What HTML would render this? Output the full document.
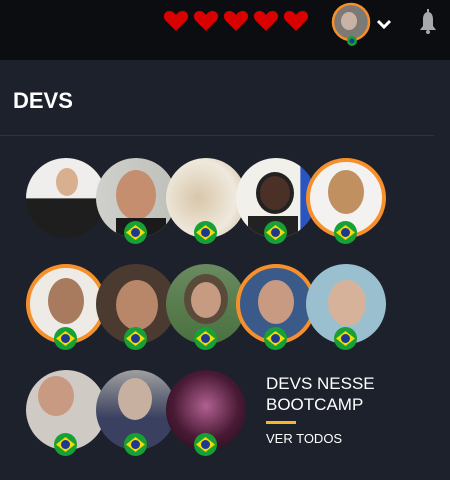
<!DOCTYPE html>
<html><head><style>
*{margin:0;padding:0;box-sizing:border-box}
body{width:450px;height:480px;background:#1c212b;font-family:"Liberation Sans","DejaVu Sans",sans-serif;position:relative;overflow:hidden}
.top{position:absolute;left:0;top:0;width:450px;height:60px;background:#0b0d10}
.av{position:absolute;width:80px;height:80px;border-radius:50%;overflow:hidden}
.or{border:4px solid #f7902a}
.fl{position:absolute;width:23px;height:23px;border-radius:50%;background:#16a035;overflow:hidden}
.fl:before{content:"";position:absolute;left:2px;top:4px;width:19px;height:15px;background:#f5d90a;clip-path:polygon(50% 0,100% 50%,50% 100%,0 50%)}
.fl:after{content:"";position:absolute;left:7px;top:7px;width:9px;height:9px;border-radius:50%;background:#1d3a8f}
</style></head><body>
<div class="top"></div>
<svg style="position:absolute;left:0;top:0" width="450" height="60">
<g fill="#d90000">
<path id="hh" d="M176 31 L166 21 C162 17 164 11 169.5 11 C172.5 11 174.5 13 176 15 C177.5 13 179.5 11 182.5 11 C188 11 190 17 186 21 Z"/>
<use href="#hh" x="30"/><use href="#hh" x="60"/><use href="#hh" x="90"/><use href="#hh" x="120"/>
</g>
<circle cx="351" cy="22" r="18" fill="#7d7a76" stroke="#f7902a" stroke-width="2.5"/>
<ellipse cx="349" cy="21" rx="8" ry="9" fill="#c9b3a6"/>
<circle cx="352" cy="41" r="5" fill="#16a035"/><circle cx="352" cy="41" r="2.5" fill="#1d3a8f"/>
<path d="M378 21 L384 27 L390 21" stroke="#fff" stroke-width="3" fill="none"/>
<path d="M420 30 L436 30 L433 26 L433 19 C433 15 431 12 428 12 C425 12 423 15 423 19 L423 26 Z" fill="#a7a9ad"/>
<rect x="427" y="9" width="2" height="3" fill="#a7a9ad"/><circle cx="428" cy="32" r="2" fill="#a7a9ad"/>
</svg>
<div style="position:absolute;left:13px;top:88px;color:#fff;font-weight:bold;font-size:22px">DEVS</div>
<div style="position:absolute;left:0;top:135px;width:434px;height:1px;background:#3a3034"></div>

<div class="av" style="left:26px;top:158px;background:linear-gradient(#efeeec 0 50%,#1e1e1e 51%)"><div style="position:absolute;left:30px;top:10px;width:22px;height:28px;border-radius:50%;background:#d8b08f"></div></div>
<div class="av" style="left:96px;top:158px;background:linear-gradient(90deg,#d0d0cc,#bfc0ba)"><div style="position:absolute;left:20px;top:12px;width:40px;height:50px;border-radius:50%;background:#c58e6e"></div><div style="position:absolute;left:20px;top:60px;width:50px;height:30px;background:#1a1a1a"></div></div>
<div class="av" style="left:166px;top:158px;background:radial-gradient(circle at 40% 50%,#d8c7a9,#efe9dd 60%,#cab59a)"></div>
<div class="av" style="left:236px;top:158px;background:linear-gradient(90deg,#f2f0ea 80%,#2a55c0 81%)"><div style="position:absolute;left:20px;top:14px;width:38px;height:42px;border-radius:50%;background:#4a3026;border:4px solid #222"></div><div style="position:absolute;left:12px;top:58px;width:50px;height:30px;background:#222"></div></div>
<div class="av or" style="left:306px;top:158px;background:#f3f2f0"><div style="position:absolute;left:18px;top:8px;width:36px;height:44px;border-radius:50%;background:#c09060"></div></div>

<div class="av or" style="left:26px;top:264px;background:#eeeae6"><div style="position:absolute;left:18px;top:10px;width:36px;height:46px;border-radius:50%;background:#a87a5e"></div></div>
<div class="av" style="left:96px;top:264px;background:#4a3a30"><div style="position:absolute;left:20px;top:16px;width:42px;height:50px;border-radius:50%;background:#b8876a"></div></div>
<div class="av" style="left:166px;top:264px;background:linear-gradient(#6a8a60,#4a7040)"><div style="position:absolute;left:18px;top:10px;width:44px;height:50px;border-radius:50%;background:#5a4a3a"></div><div style="position:absolute;left:25px;top:18px;width:30px;height:36px;border-radius:50%;background:#c79a82"></div></div>
<div class="av or" style="left:236px;top:264px;background:#3a5a8a"><div style="position:absolute;left:18px;top:12px;width:36px;height:44px;border-radius:50%;background:#c89a82"></div></div>
<div class="av" style="left:306px;top:264px;background:#9ac0d0"><div style="position:absolute;left:22px;top:16px;width:38px;height:46px;border-radius:50%;background:#d7b29a"></div></div>

<div class="av" style="left:26px;top:370px;background:#d0cac4"><div style="position:absolute;left:12px;top:6px;width:36px;height:40px;border-radius:50%;background:#c89a82"></div></div>
<div class="av" style="left:96px;top:370px;background:linear-gradient(#a0a0a0,#3a4060 60%)"><div style="position:absolute;left:22px;top:8px;width:34px;height:42px;border-radius:50%;background:#c8b0a0"></div></div>
<div class="av" style="left:166px;top:370px;background:radial-gradient(circle at 50% 45%,#b06090,#4a1a35 55%,#1a0a15)"></div>

<div class="fl" style="left:124px;top:221px"></div><div class="fl" style="left:194px;top:221px"></div><div class="fl" style="left:264px;top:221px"></div><div class="fl" style="left:334px;top:221px"></div>
<div class="fl" style="left:54px;top:327px"></div><div class="fl" style="left:124px;top:327px"></div><div class="fl" style="left:194px;top:327px"></div><div class="fl" style="left:264px;top:327px"></div><div class="fl" style="left:334px;top:327px"></div>
<div class="fl" style="left:54px;top:433px"></div><div class="fl" style="left:124px;top:433px"></div><div class="fl" style="left:194px;top:433px"></div>

<div style="position:absolute;left:266px;top:373px;color:#fff;font-size:17px;line-height:21px">DEVS NESSE<br>BOOTCAMP</div>
<div style="position:absolute;left:266px;top:421px;width:30px;height:3px;background:#f5b52e"></div>
<div style="position:absolute;left:266px;top:431px;color:#fff;font-size:13px">VER TODOS</div>
</body></html>
